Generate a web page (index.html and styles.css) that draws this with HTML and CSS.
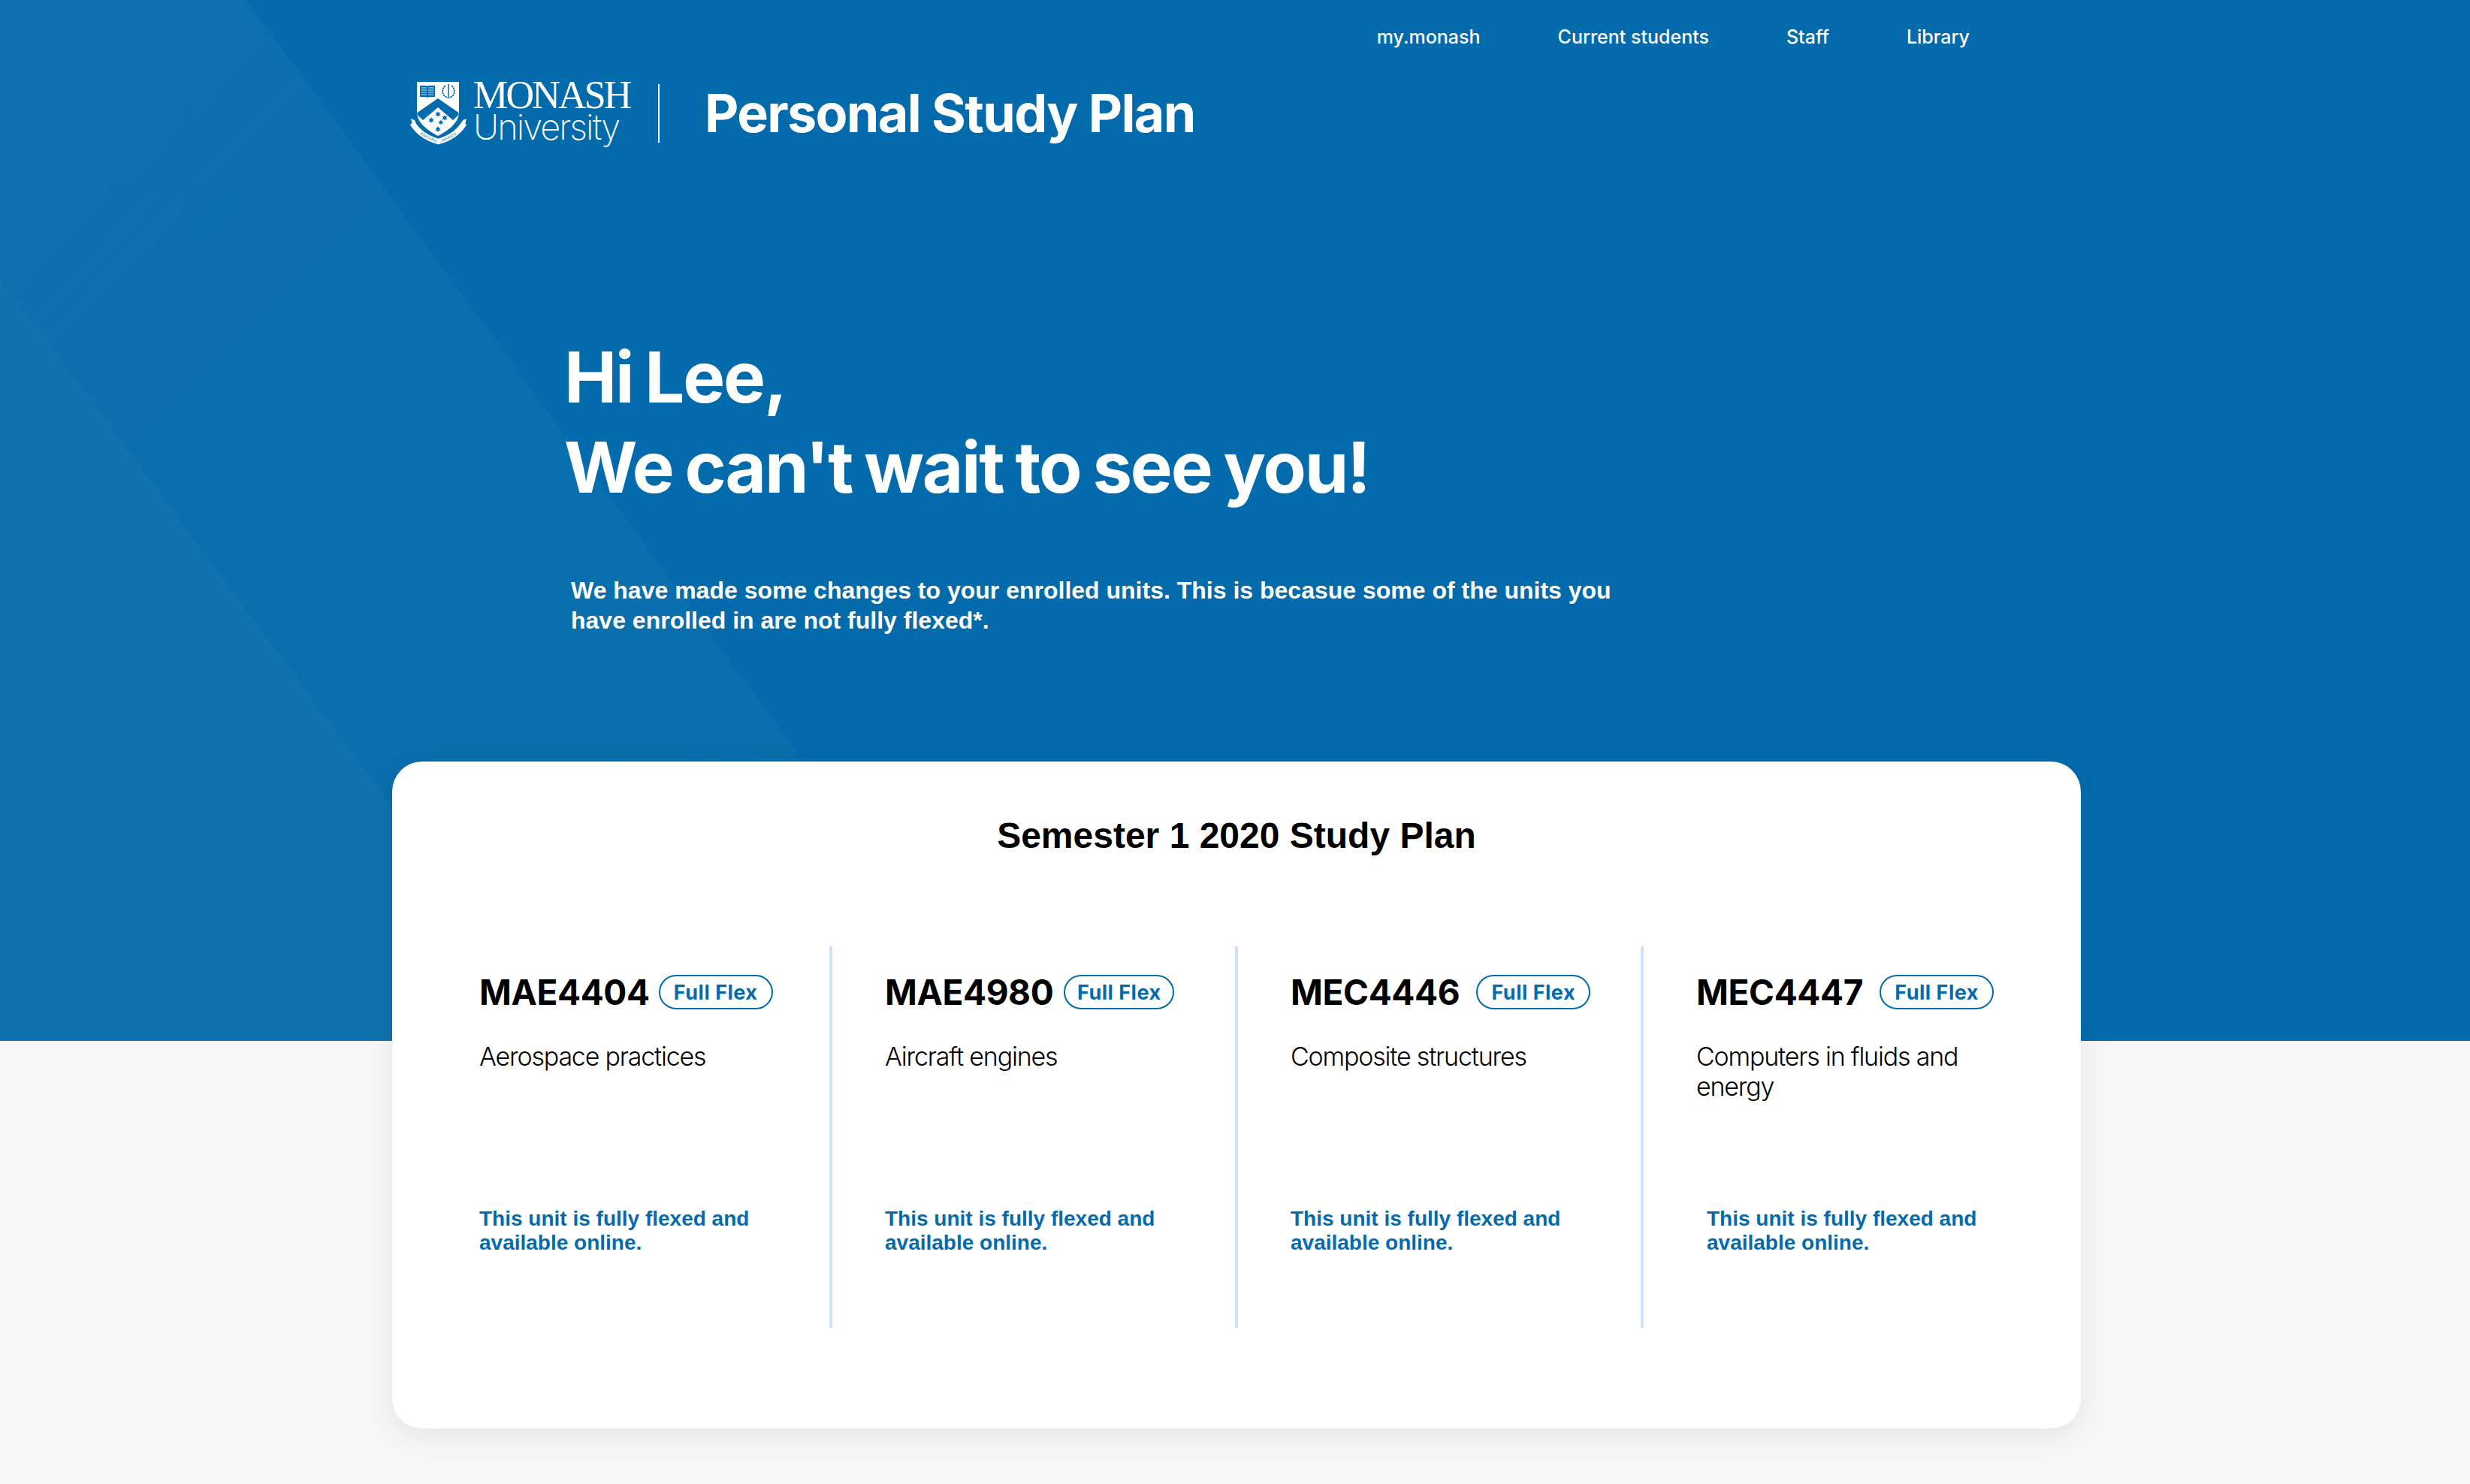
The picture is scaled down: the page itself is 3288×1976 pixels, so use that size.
FILE: index.html
```html
<!DOCTYPE html>
<html lang="en">
<head>
<meta charset="utf-8">
<title>Personal Study Plan</title>
<link rel="stylesheet" href="styles.css">
</head>
<body>
<header class="hero">
  <svg class="hero-bands" viewBox="0 0 3288 1386" preserveAspectRatio="none" aria-hidden="true">
    <defs>
      <linearGradient id="bandA" x1="0" y1="0" x2="1" y2="1">
        <stop offset="0" stop-color="#0c70ae"/>
        <stop offset="1" stop-color="#086eac"/>
      </linearGradient>
    </defs>
    <polygon points="328,0 1342,1386 0,1386 0,0" fill="url(#bandA)"/>
    <polygon points="0,370 753,1386 0,1386" fill="#1072ae"/>
  </svg>
  <nav class="top-nav">
    <a>my.monash</a>
    <a>Current students</a>
    <a>Staff</a>
    <a>Library</a>
  </nav>
  <div class="brand">
    <div class="logo">
      <svg class="crest" viewBox="0 0 76 84" aria-hidden="true">
        <defs>
          <path id="star" d="M0-4 1-1.700 3.500-2.200 2-0 3.500 2.200 1 1.700 0 4-1 1.700-3.500 2.200-2 0-3.500-2.200-1-1.700Z"/>
          <path id="ribbon-line" d="M3 55C11 68 25 76 37.500 79.500 50 76 64 68 72 55"/>
        </defs>
        <path d="M9 0H65V40C65 55 50 65 37 72 24 65 9 55 9 40Z" fill="#fff"/>
        <g fill="#036bac">
          <path d="M13 5H22L23 6 24 5H33V20H24L23 22 22 20H13Z"/>
          <path d="M37 22 64.500 41V44L57 51 37 34 17 51 9.500 44V41Z"/>
          <use href="#star" x="37" y="43"/>
          <use href="#star" x="28" y="51"/>
          <use href="#star" x="46" y="48"/>
          <use href="#star" x="41" y="54" transform="translate(4 5.400) scale(.9)"/>
          <use href="#star" x="37" y="63"/>
        </g>
        <g fill="none" stroke="#fff" stroke-width=".8">
          <path d="M14.500 8H22M14.500 11H22M14.500 14H22M14.500 17H22M24 8H31.500M24 11H31.500M24 14H31.500M24 17H31.500"/>
        </g>
        <g fill="none" stroke="#036bac">
          <path d="M51 3V22" stroke-width="1.500"/>
          <path d="M47 5C41 10 42 19 50 21M55 5C61 10 60 19 52 21" stroke-width="1.800" stroke-dasharray="2.500 .8"/>
        </g>
        <use href="#ribbon-line" fill="none" stroke="#fff" stroke-width="7.500"/>
        <path d="M1 49 6 51 9 60 3 57ZM75 49 70 51 67 60 73 57Z" fill="#fff"/>
        <text class="crest-motto"><textPath href="#ribbon-line" startOffset="50%" text-anchor="middle">ANCORA · IMPARO</textPath></text>
      </svg>
      <div class="wordmark">
        <span class="wordmark-top">MONASH</span>
        <span class="wordmark-bottom">University</span>
      </div>
    </div>
    <h1 class="site-title">Personal Study Plan</h1>
  </div>
  <section class="welcome">
    <h2 class="greeting">Hi Lee,<br>We can't wait to see you!</h2>
    <p class="intro">We have made some changes to your enrolled units. This is becasue some of the units you have enrolled in are not fully flexed*.</p>
  </section>
</header>
<main class="plan">
  <h3 class="plan-title">Semester 1 2020 Study Plan</h3>
  <div class="units">
    <article class="unit">
      <div class="unit-head"><span class="unit-code">MAE4404</span><span class="badge">Full Flex</span></div>
      <p class="unit-name">Aerospace practices</p>
      <p class="unit-note">This unit is fully flexed and available online.</p>
    </article>
    <article class="unit">
      <div class="unit-head unit-head-mid"><span class="unit-code">MAE4980</span><span class="badge badge-narrow">Full Flex</span></div>
      <p class="unit-name">Aircraft engines</p>
      <p class="unit-note">This unit is fully flexed and available online.</p>
    </article>
    <article class="unit">
      <div class="unit-head unit-head-wide"><span class="unit-code">MEC4446</span><span class="badge">Full Flex</span></div>
      <p class="unit-name">Composite structures</p>
      <p class="unit-note">This unit is fully flexed and available online.</p>
    </article>
    <article class="unit unit-last">
      <div class="unit-head unit-head-wide"><span class="unit-code">MEC4447</span><span class="badge">Full Flex</span></div>
      <p class="unit-name">Computers in fluids and energy</p>
      <p class="unit-note">This unit is fully flexed and available online.</p>
    </article>
  </div>
</main>
</body>
</html>
```
FILE: styles.css
```css
* { box-sizing: border-box; }
html, body { margin: 0; padding: 0; }
body {
  width: 3288px;
  height: 1976px;
  overflow: hidden;
  background: #f7f7f7;
  font-family: Inter, "Liberation Sans", sans-serif;
  color: #000;
}
.hero {
  position: relative;
  height: 1386px;
  background: #036bac;
  color: #fff;
  overflow: hidden;
}
.hero-bands {
  position: absolute;
  left: 0;
  top: 0;
  width: 3288px;
  height: 1386px;
}
.top-nav {
  position: relative;
  display: flex;
  justify-content: flex-end;
  gap: 103px;
  height: 98px;
  padding: 33px 666px 0 0;
  font-size: 25px;
  line-height: 32px;
  font-weight: 500;
}
.brand {
  position: relative;
  display: flex;
  align-items: center;
  height: 90px;
  margin-top: 8px;
  padding-left: 546px;
}
.logo {
  display: flex;
  align-items: center;
  width: 332px;
  height: 78px;
  border-right: 2px solid #fff;
  margin-right: 60px;
}
.crest {
  width: 76px;
  height: 84px;
  flex: none;
  margin-right: 8px;
}
.crest-motto {
  font-family: "Liberation Sans", sans-serif;
  font-size: 5px;
  letter-spacing: .5px;
  fill: #036bac;
  dominant-baseline: central;
}
.wordmark {
  display: flex;
  flex-direction: column;
  margin-top: -5px;
}
.wordmark-top {
  font-family: "Liberation Serif", serif;
  font-size: 52px;
  line-height: 40px;
  letter-spacing: -2.800px;
}
.wordmark-bottom {
  font-size: 47px;
  line-height: 44px;
  font-weight: 200;
  letter-spacing: -2px;
}
.site-title {
  margin: 0;
  font-size: 70px;
  line-height: 90px;
  font-weight: 700;
  letter-spacing: -1.650px;
}
.welcome {
  position: relative;
  padding: 246px 0 0 751px;
}
.greeting {
  margin: 0;
  font-size: 94px;
  line-height: 120px;
  font-weight: 700;
  letter-spacing: -2.200px;
  word-spacing: -4px;
}
.intro {
  width: 1420px;
  margin: 84px 0 0 9px;
  font-family: "Liberation Sans", sans-serif;
  font-size: 32px;
  line-height: 40px;
  font-weight: 700;
}
.plan {
  position: relative;
  width: 2248px;
  height: 888px;
  margin: -372px 0 0 522px;
  padding-top: 66px;
  background: #fff;
  border-radius: 40px;
  box-shadow: 0 10px 40px rgba(0, 0, 0, 0.08);
}
.plan-title {
  margin: 0;
  text-align: center;
  font-family: "Liberation Sans", sans-serif;
  font-size: 48px;
  line-height: 66px;
  font-weight: 700;
}
.units {
  display: grid;
  grid-template-columns: repeat(4, 540px);
  margin: 114px 0 0 46px;
}
.unit {
  height: 508px;
  padding: 36px 20px 0 70px;
  border-right: 4px solid #cfe1f3;
}
.unit-last { border-right: 0; }
.unit-head {
  display: flex;
  align-items: center;
  gap: 12px;
  height: 50px;
}
.unit-head-mid { gap: 14px; }
.unit-head-wide { gap: 22px; }
.unit-code {
  font-size: 46px;
  line-height: 50px;
  font-weight: 700;
  letter-spacing: -.4px;
}
.badge {
  display: flex;
  align-items: center;
  justify-content: center;
  width: 152px;
  height: 46px;
  border: 2px solid #036bac;
  border-radius: 23px;
  color: #036bac;
  font-size: 27px;
  font-weight: 700;
  letter-spacing: .5px;
}
.badge-narrow { width: 147px; }
.unit-name {
  height: 220px;
  margin: 41px 0 0;
  font-size: 34px;
  line-height: 40px;
  font-weight: 300;
  letter-spacing: -1.200px;
}
.unit-note {
  margin: 0;
  color: #036bac;
  font-family: "Liberation Sans", sans-serif;
  font-size: 28px;
  line-height: 32px;
  font-weight: 700;
}
.unit-last .unit-note { padding-left: 14px; }
```
